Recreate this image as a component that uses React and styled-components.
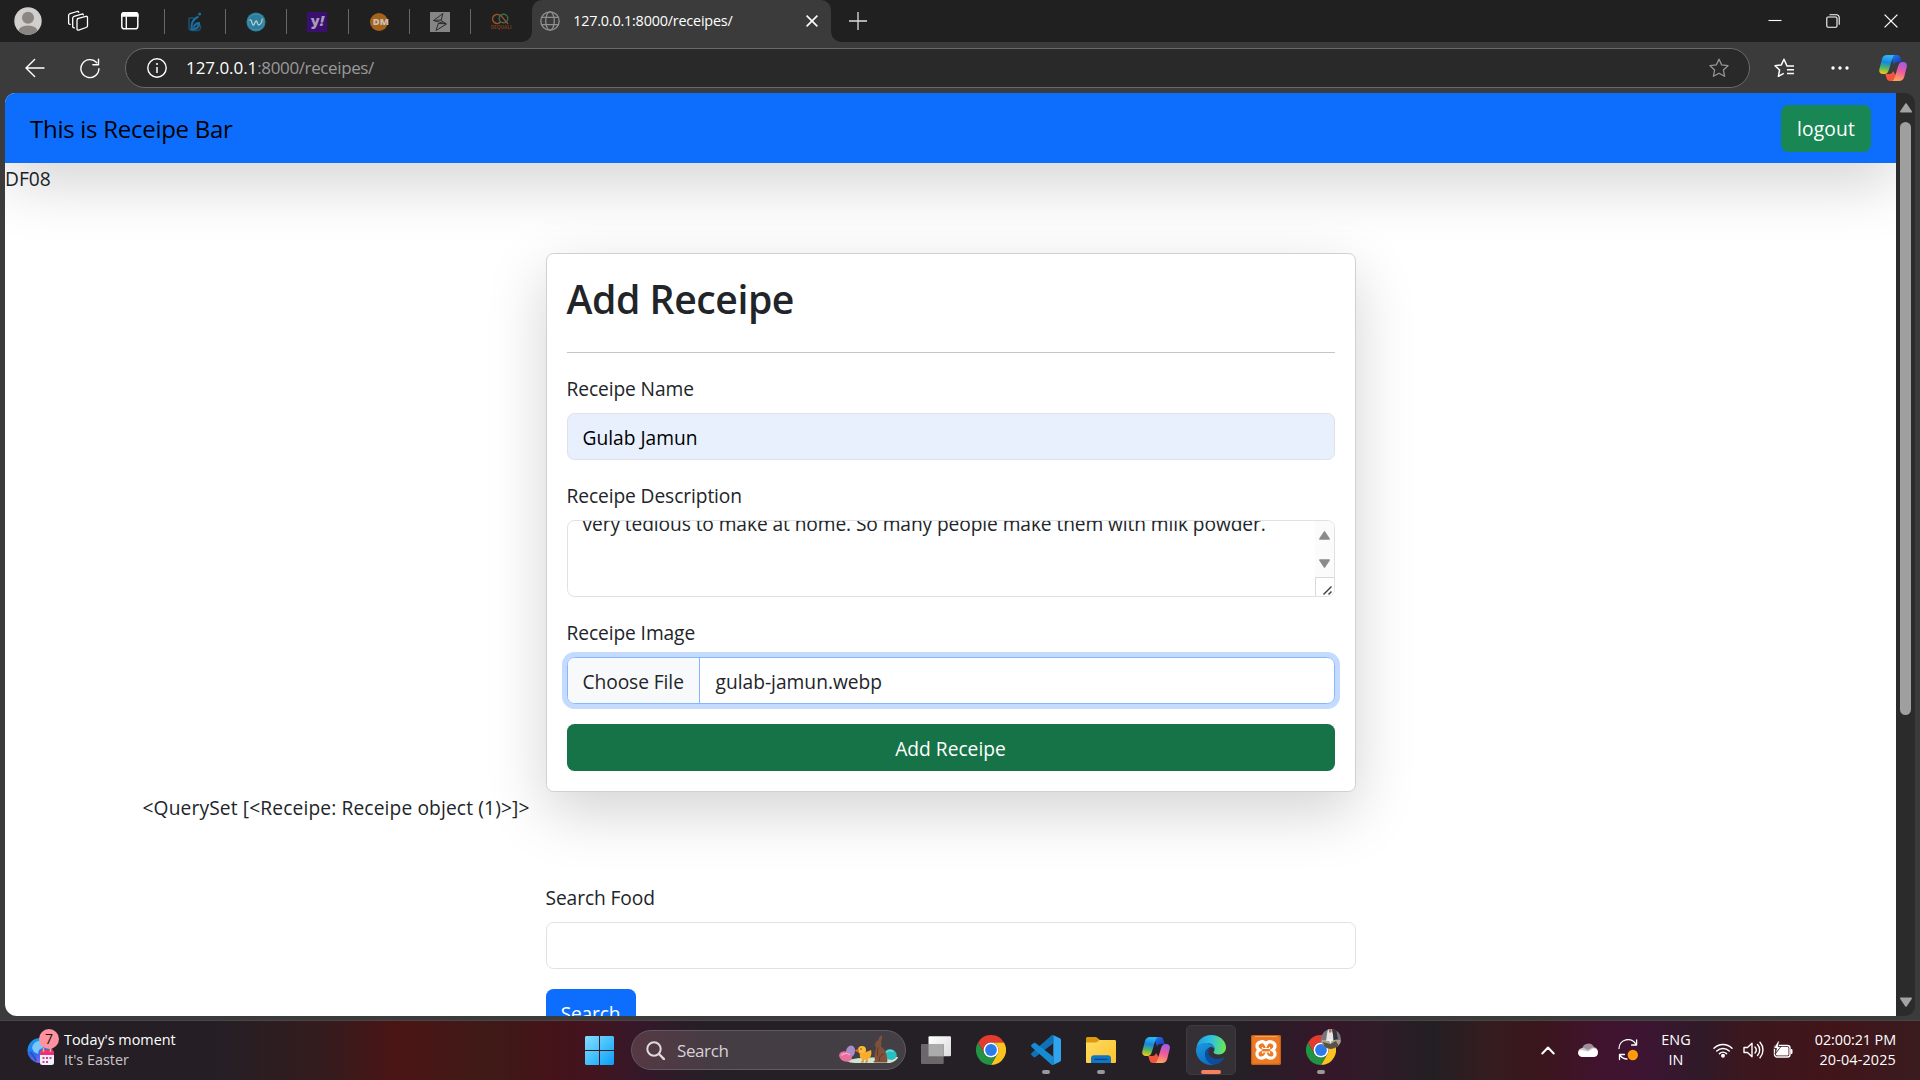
import React from "react";
import styled, { createGlobalStyle, css } from "styled-components";

const GlobalStyle = createGlobalStyle`
  *, *::before, *::after { box-sizing: border-box; }
  body { margin: 0; overflow: hidden; background: #3b3b3b; }
  svg { display: block; flex: none; }
`;

const UI_FONT = `"Segoe UI", "Open Sans", "Noto Sans", sans-serif`;

const Desktop = styled.div`
  width: 1920px;
  height: 1080px;
  display: flex;
  flex-direction: column;
  overflow: hidden;
  background: #3b3b3b;
  font-family: ${UI_FONT};
`;

/* ---------- browser chrome ---------- */

const TabStrip = styled.div`
  display: flex;
  align-items: center;
  height: 42px;
  background: #202020;
`;

const Cell = styled.div`
  width: ${(p) => p.$w}px;
  height: 100%;
  flex: none;
  display: flex;
  align-items: center;
  justify-content: center;
`;

const PinnedTabs = styled.div`
  display: flex;
  flex: none;
  margin: 1px 1px 0 3px;
`;

const PinnedTab = styled.div`
  width: 61.2px;
  height: 25px;
  border-left: 1px solid #686868;
  display: flex;
  align-items: center;
  justify-content: center;
`;

const flare = css`
  content: "";
  position: absolute;
  bottom: 0;
  width: 10px;
  height: 10px;
`;

const ActiveTab = styled.div`
  position: relative;
  width: 299px;
  height: 42px;
  padding: 0 13px 0 8px;
  display: flex;
  align-items: center;
  background: #3b3b3b;
  border-radius: 10px 10px 0 0;
  color: #fff;
  &::before {
    ${flare}
    left: -10px;
    background: radial-gradient(circle at 0 0, transparent 9.5px, #3b3b3b 10px);
  }
  &::after {
    ${flare}
    right: -10px;
    background: radial-gradient(circle at 100% 0, transparent 9.5px, #3b3b3b 10px);
  }
`;

const TabTitle = styled.span`
  flex: 1;
  margin-left: 13px;
  font-size: 14.4px;
  line-height: 20px;
  letter-spacing: -0.2px;
`;

const Spacer = styled.div`
  flex: 1;
`;

const Toolbar = styled.div`
  display: flex;
  align-items: center;
  height: 51px;
  padding: 1px 0 0 7px;
`;

const AddressBar = styled.div`
  width: 1624.5px;
  height: 40px;
  margin: 0 7px 1px 8px;
  padding: 0 20px 0 21px;
  display: flex;
  align-items: center;
  border: 1px solid #6a6a6a;
  border-radius: 20px;
  background: #292929;
`;

const Url = styled.span`
  flex: 1;
  margin-left: 19px;
  font-size: 17px;
  line-height: 24px;
  letter-spacing: -0.38px;
  color: #999;
`;

const Host = styled.span`
  letter-spacing: -0.05px;
  color: #fff;
`;

/* ---------- web page ---------- */

const PageRow = styled.div`
  display: flex;
  height: 923px;
  padding: 0 5px;
`;

const Viewport = styled.div`
  flex: 1;
  overflow: hidden;
  background: #fff;
  border-radius: 10px 0 0 12px;
  color: #212529;
  font-size: 19.2px;
  line-height: 30px;
`;

const Navbar = styled.nav`
  position: relative;
  display: flex;
  align-items: center;
  justify-content: space-between;
  height: 70px;
  padding: 0 25px;
  background: #0d6efd;
  box-shadow: 0 20px 60px rgba(0, 0, 0, 0.175);
`;

const Brand = styled.span`
  padding-top: 2px;
  font-size: 24px;
  letter-spacing: -0.27px;
  color: #000;
`;

const Button = styled.button`
  display: ${(p) => (p.$block ? "block" : "inline-block")};
  width: ${(p) => (p.$block ? "100%" : p.$w + "px")};
  height: 47px;
  padding: 2px 0 0;
  border: 0;
  border-radius: 7.5px;
  background: ${(p) => p.$bg};
  color: #fff;
  font: 19.2px/30px ${UI_FONT};
  letter-spacing: ${(p) => p.$ls || 0}px;
`;

const Username = styled.div`
  height: 30px;
  padding-top: 1px;
`;

const Container = styled.div`
  width: 1650px;
  margin: 60px auto 0;
  padding: 0 16px;
`;

const Card = styled.section`
  width: 810px;
  margin: 0 auto;
  padding: 20px;
  border: 1px solid #d0d0d1;
  border-radius: 7.5px;
  background: #fff;
  box-shadow: 0 20px 60px rgba(0, 0, 0, 0.175);
`;

const Title = styled.h2`
  height: 48px;
  margin: 0;
  padding-top: 1px;
  font-size: 39.2px;
  font-weight: 600;
  line-height: 48px;
  letter-spacing: -0.45px;
`;

const Rule = styled.hr`
  height: 1px;
  margin: 30px 0 20px;
  border: 0;
  background: #c4c5c6;
`;

const Field = styled.div`
  margin-bottom: 20px;
`;

const Label = styled.label`
  display: block;
  height: 30px;
  margin-bottom: 10px;
  padding-top: 1px;
  letter-spacing: -0.1px;
`;

const control = css`
  width: 100%;
  border: 1px solid #dee2e6;
  border-radius: 7.5px;
`;

const Input = styled.input`
  ${control}
  display: block;
  height: 47px;
  padding: 2px 15px 0;
  background: ${(p) => p.$bg || "#fff"};
  color: #000;
  font: 19.2px/30px ${UI_FONT};
  outline: 0;
`;

const TextArea = styled.div`
  ${control}
  display: flex;
  height: 77px;
  overflow: hidden;
`;

const TextAreaText = styled.div`
  flex: 1;
  margin-top: -12px;
  padding-left: 15px;
  white-space: nowrap;
  letter-spacing: -0.1px;
`;

const TextAreaScroll = styled.div`
  width: 19px;
  display: flex;
  flex-direction: column;
  align-items: center;
  background: #fbfbfb;
`;

const ScrollArrows = styled.div`
  flex: 1;
  padding: 10px 0 9px;
  display: flex;
  flex-direction: column;
  justify-content: space-between;
`;

const Resizer = styled.div`
  width: 19px;
  height: 19px;
  border: solid #d9d9db;
  border-width: 1px 0 0 1px;
  background: #fff;
`;

const FileInput = styled.div`
  display: flex;
  height: 47px;
  margin-bottom: 20px;
  border: 1px solid #86b7fe;
  border-radius: 7.5px;
  box-shadow: 0 0 0 5px #c2dbff;
  overflow: hidden;
  line-height: 48px;
`;

const FileButton = styled.span`
  width: 132px;
  padding-left: 15px;
  border-right: 1px solid #86b7fe;
  background: #f8f9fa;
  letter-spacing: -0.08px;
`;

const FileName = styled.span`
  padding-left: 16px;
`;

const QueryDump = styled.div`
  height: 30px;
  padding: 1px 0 0 1px;
  letter-spacing: 0.13px;
`;

const SearchForm = styled.form`
  width: 810px;
  margin: 60px auto 0;
`;

const Scrollbar = styled.div`
  width: 19px;
  padding: 10px 0 9px;
  display: flex;
  flex-direction: column;
  align-items: center;
  background: #2b2b2b;
  border-radius: 0 10px 10px 0;
`;

const Thumb = styled.div`
  width: 11px;
  height: 593px;
  margin: 9px 0 auto;
  border-radius: 6px;
  background: #9f9f9f;
`;

/* ---------- taskbar ---------- */

const Taskbar = styled.footer`
  display: flex;
  align-items: center;
  height: 60px;
  margin-top: 4px;
  padding-bottom: 1px;
  border-top: 1px solid #4b4547;
  background: linear-gradient(
    90deg,
    #251f25 0, #251f25 220px, #361b1d 330px, #4b1414 395px, #3e1a17 490px,
    #451319 550px, #42141f 590px, #35182a 640px, #251f26 710px, #251f26 1240px,
    #35172a 1325px, #2f1c28 1380px, #231f23 1430px, #351c1f 1490px, #3a161c 1540px,
    #41132e 1600px, #3c1532 1650px, #301a28 1700px, #3c171e 1745px, #41151a 1830px,
    #391b1e 1920px
  );
  color: #fff;
`;

const Widget = styled.div`
  display: flex;
  align-items: center;
  width: 572px;
  padding-left: 26px;
`;

const Lines = styled.div`
  display: flex;
  flex-direction: column;
  flex: none;
  align-items: ${(p) => p.$align || "flex-start"};
  margin-left: ${(p) => p.$ml || 0}px;
  padding-right: ${(p) => p.$pr || 0}px;
  width: ${(p) => (p.$w ? p.$w + "px" : "auto")};
`;

const Line = styled.span`
  font-size: 14.4px;
  line-height: 20px;
  letter-spacing: ${(p) => p.$ls || 0}px;
  color: ${(p) => (p.$dim ? "#c9c5c8" : "#fff")};
  white-space: nowrap;
`;

const SearchPill = styled.div`
  width: 275px;
  height: 40px;
  margin: 0 2.5px 0 4px;
  padding: 0 6px 0 14px;
  display: flex;
  align-items: center;
  border: 1px solid #615a60;
  border-radius: 20px;
  background: linear-gradient(90deg, #553843, #443d44 35%, #443f45);
`;

const SearchText = styled.span`
  flex: 1;
  margin-left: 12px;
  font-size: 17px;
  letter-spacing: -0.4px;
  color: #d6d2d5;
`;

const AppSlot = styled.div`
  position: relative;
  width: 50px;
  height: 50px;
  margin: 0 2.5px;
  display: flex;
  align-items: center;
  justify-content: center;
  border: 1px solid ${(p) => (p.$active ? "#3f3a40" : "transparent")};
  border-radius: 5px;
  background: ${(p) => (p.$active ? "#353036" : "transparent")};
`;

const RunMark = styled.span`
  position: absolute;
  bottom: 0;
  left: 50%;
  width: ${(p) => (p.$active ? 20 : 8)}px;
  height: 4px;
  transform: translateX(-50%);
  border-radius: 2px;
  background: ${(p) => (p.$active ? "#f7815f" : "#9b989b")};
`;

/* ---------- icons ---------- */

const Svg = ({ w, h = w, vb, children, ...rest }) => (
  <svg width={w} height={h} viewBox={vb || `0 0 ${w} ${h}`} fill="none" {...rest}>
    {children}
  </svg>
);

const stroke = { stroke: "#fff", strokeWidth: 1.4, strokeLinecap: "round", strokeLinejoin: "round" };

const Avatar = () => (
  <Svg w={28}>
    <clipPath id="av"><circle cx="14" cy="14" r="13.7" /></clipPath>
    <g clipPath="url(#av)">
      <rect width="28" height="28" fill="#d1cfcd" />
      <circle cx="14" cy="10.8" r="6" fill="#8b8682" />
      <ellipse cx="14" cy="25" rx="10" ry="6.6" fill="#8b8682" />
    </g>
  </Svg>
);

const Workspaces = () => (
  <Svg w={22} {...stroke} strokeWidth="1.3">
    <path d="M10.300 8.600 19 6.300c.9-.2 1.500.3 1.500 1.100v8.300c0 .9-.5 1.500-1.400 1.800l-7.400 2.600c-.9.3-1.700-.2-1.700-1.200v-8.600c0-.9.5-1.500 1.300-1.700z" />
    <path d="M7.400 17.800c-1 .2-1.700-.4-1.700-1.400V8.200c0-1 .5-1.600 1.400-1.900l7.600-2.200c.8-.2 1.500.1 1.700.8" />
    <path d="M3.200 14.400c-.9.1-1.600-.5-1.600-1.400V5.600c0-1 .5-1.600 1.400-1.900l7.100-2.200c.8-.2 1.500.1 1.700.8" />
  </Svg>
);

const TabActions = () => (
  <Svg w={20}>
    <rect x="1.8" y="1.8" width="16" height="16" rx="2.6" {...stroke} strokeWidth="1.5" />
    <path d="M1.2 5.8V4a3 3 0 0 1 3-3h11.400a3 3 0 0 1 3 3v1.800z" fill="#fff" />
    <path d="M6.300 6v11.500" {...stroke} />
  </Svg>
);

const FavBlue = () => (
  <Svg w={14} h={20}>
    <path d="M1 6h5M1 6v10c0 2 1.500 2.500 4 2.500h4c2.500 0 3.500-1.500 3.500-3.500 0-3-3.500-3.500-6-1.500" stroke="#1d4f72" strokeWidth="1.500" />
    <path d="M10.500 4.500C6 6.500 3 11 3.500 17c4 1 8-2 7.500-6-2 0-4.500 1.500-5.500 4.500" stroke="#1b6f9f" strokeWidth="2" />
    <circle cx="11.600" cy="2" r="1.500" fill="#1b6f9f" />
  </Svg>
);

const FavW = () => (
  <Svg w={20}>
    <circle cx="10" cy="10" r="9.600" fill="#2b7e9b" />
    <circle cx="10" cy="10" r="7.900" stroke="#4e9ab3" strokeWidth=".7" />
    <path d="M3.500 8.500c1-1 1.800-.5 2.100.8.500 2.300 1 4 1.800 3.900 1.200-.2 1.300-4 2.800-4.200 1.300 0 1.100 4 2.400 4 1.800 0 3.300-3.400 3.700-6.500" stroke="#b7ccd4" strokeWidth="1.300" />
  </Svg>
);

const YahooBox = styled.span`
  width: 20px;
  height: 20px;
  background: #3a0f70;
  color: #a99dbb;
  font: 800 14.5px/17px "Open Sans", sans-serif;
  text-align: center;
`;

const DmBox = styled.span`
  width: 18px;
  height: 18px;
  border-radius: 50%;
  background: #a4621a;
  color: #c9bfb4;
  font: 800 9.5px/18px "Open Sans", sans-serif;
  padding-left: 3px;
  white-space: nowrap;
`;

const FavZig = () => (
  <Svg w={20}>
    <rect width="20" height="20" fill="#858585" />
    <path d="M13 1.500 3.500 8.500 16.500 12 6 18.500 8.500 11M13 1.500 11 8.500 16 11.500M3.500 8.500 11 8M8.500 11.500l7.500.3" stroke="#2d2d2d" strokeWidth="1" />
  </Svg>
);

const CqBox = styled.span`
  width: 20px;
  display: flex;
  flex-direction: column;
  align-items: center;
  font: 700 4.7px/5px "Open Sans", sans-serif;
  color: #7d3c1d;
`;

const CqIcon = () => (
  <CqBox>
    <Svg w={18} h={12}>
      <path d="M8 2.500A4.500 4.500 0 1 0 8.500 9" stroke="#9a5426" strokeWidth="1.500" />
      <circle cx="11.500" cy="5.500" r="4.300" stroke="#3d6b52" strokeWidth="1.400" />
      <path d="m8.500 2 7.500 9" stroke="#9a5426" strokeWidth="1.200" />
    </Svg>
    DEQUALI
  </CqBox>
);

const Globe = () => (
  <Svg w={20} stroke="#8f8f8f" strokeWidth="1.300">
    <circle cx="10" cy="10" r="9.200" />
    <ellipse cx="10" cy="10" rx="4.300" ry="9.200" />
    <path d="M1.700 6.300h16.600M1.700 13.700h16.600" />
  </Svg>
);

const Cross = ({ s = 12, sw = 1.6 }) => (
  <Svg w={s} {...stroke} strokeWidth={sw} strokeLinecap="butt">
    <path d={`M.6.6 ${s - 0.6} ${s - 0.6}M${s - 0.6}.6.6 ${s - 0.6}`} />
  </Svg>
);

const Plus = () => (
  <Svg w={18}><path d="M9 0v18M0 9h18" stroke="#ddd" strokeWidth="1.300" /></Svg>
);

const Minimize = () => (
  <Svg w={14}><path d="M.5 6.500h13" stroke="#fff" strokeWidth="1.100" /></Svg>
);

const Restore = () => (
  <Svg w={14} stroke="#fff" strokeWidth="1.100">
    <rect x=".8" y="3" width="10.200" height="10.200" rx="1.200" />
    <path d="M3.500.8h7.200a2.500 2.500 0 0 1 2.500 2.500v7.500" />
  </Svg>
);

const Back = () => (
  <Svg w={20} {...stroke} strokeWidth="1.400"><path d="M19 10H1.200M9.600 1.500 1 10l8.600 8.500" /></Svg>
);

const Reload = () => (
  <Svg w={20} h={21} {...stroke} strokeWidth="1.400">
    <path d="M18.900 10.800a9 9 0 1 1-2.100-6" />
    <path d="M18.500 1.200v5.600h-5.600" />
  </Svg>
);

const Info = () => (
  <Svg w={20} stroke="#fff" strokeWidth="1.400">
    <circle cx="10" cy="10" r="9.200" />
    <path d="M10 9v6" strokeWidth="1.500" />
    <circle cx="10" cy="6" r=".4" />
  </Svg>
);

const STAR = "m10 1.200 2.700 5.700 6.300.8-4.600 4.300 1.200 6.300-5.600-3.100-5.600 3.100 1.200-6.300L1 7.700l6.300-.8z";

const Star = () => (
  <Svg w={20} stroke="#959595" strokeWidth="1.300" strokeLinejoin="round"><path d={STAR} /></Svg>
);

const FavList = () => (
  <Svg w={21} h={20} {...stroke} strokeWidth="1.500">
    <path d="M20 8h-7L10 1.200 7.300 6.900 1 7.700l4.600 4.300-1.200 6.300 5.300-3M13 11.700h7M13 15.400h7" strokeLinecap="butt" />
  </Svg>
);

const Dots = () => (
  <Svg w={18} h={4}>
    <circle cx="2" cy="2" r="1.700" fill="#fff" /><circle cx="9" cy="2" r="1.700" fill="#fff" /><circle cx="16" cy="2" r="1.700" fill="#fff" />
  </Svg>
);

const Copilot = ({ id }) => (
  <Svg w={28} h={26}>
    <defs>
      <linearGradient id={id + "a"} x1="8" y1="1" x2="5" y2="19" gradientUnits="userSpaceOnUse">
        <stop stopColor="#2cb5f5" /><stop offset=".35" stopColor="#1787e0" /><stop offset=".65" stopColor="#4cb56a" /><stop offset="1" stopColor="#f6c915" />
      </linearGradient>
      <linearGradient id={id + "b"} x1="22" y1="7" x2="17" y2="25" gradientUnits="userSpaceOnUse">
        <stop stopColor="#a25ae8" /><stop offset=".5" stopColor="#ee5b9a" /><stop offset="1" stopColor="#ffa35c" />
      </linearGradient>
      <linearGradient id={id + "c"} x1="14" y1="0" x2="19" y2="8" gradientUnits="userSpaceOnUse">
        <stop stopColor="#1f7ae6" /><stop offset="1" stopColor="#1b3fc2" />
      </linearGradient>
    </defs>
    <path d="M9 0h9c2 0 3 1.300 3.500 3l1.200 4h-4c-2 0-3.200 1-3.800 3L12 0z" fill={`url(#${id}c)`} />
    <path d="M19 26h-8c-2 0-3-1.300-3.500-3l-1.200-4h4c2 0 3.200-1 3.800-3l2.500 4z" fill="#f2553d" />
    <path d="M8 0h8c-1.500.5-2.200 2-2.700 3.500L10 14.500C9 17.500 8 19 5.500 19H4c-3 0-4.300-2-3.600-5L3 4C3.700 1.500 5.500 0 8 0z" fill={`url(#${id}a)`} />
    <path d="M20 26h-7c1.500-.5 2.200-2 2.700-3.500L19 11.500c1-3 2-4.500 4.500-4.500h.7c3 0 4.300 2 3.500 5l-2.500 10c-.7 2.500-2.700 4-5.200 4z" fill={`url(#${id}b)`} />
  </Svg>
);

const Arrow = ({ down, w = 12, h = 10, fill = "#a3a3a3" }) => (
  <Svg w={w} h={h} vb="0 0 12 10">
    <path
      transform={down ? "rotate(180 6 5)" : undefined}
      d="M6 1 11.200 8.800H.8z" fill={fill} stroke={fill} strokeWidth="1.600" strokeLinejoin="round"
    />
  </Svg>
);

const Grip = () => (
  <Svg w={18}><path d="m7.500 16.500 8-8M12.500 16.500l3-3" stroke="#444" strokeWidth="1.500" /></Svg>
);

const Moment = () => (
  <Svg w={34} h={38}>
    <defs>
      <linearGradient id="gl" x1="6" y1="10" x2="18" y2="36" gradientUnits="userSpaceOnUse">
        <stop stopColor="#10a4f2" /><stop offset=".55" stopColor="#2f6be6" /><stop offset="1" stopColor="#a85af0" />
      </linearGradient>
    </defs>
    <circle cx="14" cy="22.500" r="12.500" fill="url(#gl)" />
    <path d="M6 20c1-5 5-8 10-7l2 6-5 3-1 4-4-2z" fill="#7cc6fb" />
    <path d="M4 24c3 3 5 5 6 9" stroke="#2456c8" strokeWidth="2" />
    <rect x="14" y="23" width="14" height="14" rx="2.500" fill="#eef0fa" />
    <path d="M14 27v-2a3 3 0 0 1 3-3h8a3 3 0 0 1 3 3v2z" fill="#ef2e7b" />
    <path d="M17.500 20v4M24.500 20v4" stroke="#f5b14a" strokeWidth="1.500" />
    <g fill="#d83c86">
      <rect x="16.500" y="29" width="2" height="2" /><rect x="20" y="29" width="2" height="2" /><rect x="23.500" y="29" width="2" height="2" />
      <rect x="16.500" y="33" width="2" height="2" /><rect x="20" y="33" width="2" height="2" />
    </g>
  </Svg>
);

const MomentBox = styled.div`
  position: relative;
  margin-top: -7px;
`;

const Badge = styled.span`
  position: absolute;
  left: 13px;
  top: 1px;
  width: 20px;
  height: 20px;
  border-radius: 50%;
  background: #ff929e;
  color: #1c1418;
  font-size: 14px;
  line-height: 20px;
  text-align: center;
`;

const WindowsLogo = () => (
  <Svg w={29}>
    <defs>
      <linearGradient id="win" x1="0" y1="0" x2="29" y2="29" gradientUnits="userSpaceOnUse">
        <stop stopColor="#84dcff" /><stop offset=".5" stopColor="#45c1fb" /><stop offset="1" stopColor="#0b9cf8" />
      </linearGradient>
    </defs>
    <path fill="url(#win)" d="M1 0h13v14H0V1zM15 0h13l1 1v13H15zM0 15h14v14H1l-1-1zM15 15h14v13l-1 1H15z" />
  </Svg>
);

const SearchGlyph = () => (
  <Svg w={19} stroke="#dedade" strokeWidth="2">
    <circle cx="8" cy="8" r="6.700" /><path d="m13 13 5 5.200" strokeWidth="2.400" strokeLinecap="round" />
  </Svg>
);

const EasterScene = () => (
  <Svg w={60} h={30}>
    <path d="M8 26c6-3 14-3 24-3.500S50 21 59 22c0 2-4 5-8 6H16c-4 0-6-1-8-2z" fill="#cfe6cd" />
    <ellipse cx="11.500" cy="16.500" rx="4.500" ry="6" transform="rotate(15 11.500 16.500)" fill="#a98cc9" />
    <ellipse cx="6.500" cy="21.500" rx="6.600" ry="4.900" transform="rotate(25 6.500 21.500)" fill="#e8709f" />
    <path d="M2.500 20.500c2.500-2.500 6-2.500 8.500-.500" stroke="#f4abc6" strokeWidth="1.400" />
    <ellipse cx="51.500" cy="19.500" rx="6.300" ry="5.300" transform="rotate(20 51.500 19.500)" fill="#27bfc0" />
    <path d="M47.500 17c2-1.800 4.500-1.800 7-.5" stroke="#7fe0dc" strokeWidth="1.200" />
    <circle cx="23" cy="15" r="4" fill="#fdbb3c" />
    <path d="M21 18c3 0 7-1 11-3 1.500 5-1 10-6 10-4 0-6-3-5-7z" fill="#fbac2b" />
    <path d="m19 14.500-2 1.200 2.500 1zM24 24.500v2.500h-2M28 24.500v2.500h-2" stroke="#e3701c" strokeWidth="1.200" />
    <circle cx="22" cy="14" r=".7" fill="#51300d" />
    <path d="M36 10c0-3 2-4.500 3.500-4.700C39.500 3 41 .8 42.500.5c1 0 1 3.500-.5 6 .6 1.500.6 3-.3 4.500 4 3 6 7 6.300 11.500.6 2 .6 3.500 0 5H36c-2 0-2-1.500 0-2-1-4.500-.6-9 1.200-12.500C36.500 12 36 11 36 10z" fill="#80503a" />
    <path d="M40.500 26c-.500-4 1.500-6.500 4.500-7M39 12.500c-.5 2.500-.8 5-.5 8" stroke="#5f3826" strokeWidth="1" />
  </Svg>
);

const TaskView = () => (
  <Svg w={30} h={28}>
    <defs>
      <linearGradient id="tv" x1="8" y1="0" x2="30" y2="20" gradientUnits="userSpaceOnUse"><stop stopColor="#fff" /><stop offset="1" stopColor="#dcdcdc" /></linearGradient>
    </defs>
    <rect x="7.500" y=".3" width="22.500" height="20" rx="1" fill="url(#tv)" />
    <rect y="8" width="22.700" height="20" rx="1" fill="#6b686b" />
    <path d="M7.500 8h15.200v12.300H7.500z" fill="#ababab" />
  </Svg>
);

const Chrome = () => (
  <Svg w={30}>
    <path d="M2 7.500A15 15 0 0 1 28 7.500H15a7.500 7.500 0 0 0-6.500 11.250z" fill="#e33b2e" />
    <path d="M28 7.500A15 15 0 0 1 15 30l6.500-11.250A7.500 7.500 0 0 0 15 7.500z" fill="#fcc31f" />
    <path d="M2 7.500A15 15 0 0 0 15 30l6.500-11.250a7.500 7.500 0 0 1-13 0z" fill="#229342" />
    <circle cx="15" cy="15" r="7.500" fill="#fff" />
    <circle cx="15" cy="15" r="5.900" fill="#2d7bea" />
  </Svg>
);

const VsCode = () => (
  <Svg w={30}>
    <path d="M22 0v8.500L4.500 22c-.6.500-1.300.5-1.800 0L.6 20.200c-.7-.6-.7-1.500 0-2.200L20.300.6C20.700.2 21.400 0 22 0z" fill="#0f72b8" />
    <path d="M22 30v-8.500L4.500 8c-.6-.5-1.300-.5-1.800 0L.6 9.800c-.7.6-.7 1.500 0 2.200l19.700 17.400c.4.400 1.100.6 1.700.6z" fill="#168bd2" />
    <path d="m22 0 6.800 3.200c.7.400 1.200 1 1.200 1.800v20c0 .8-.5 1.500-1.200 1.800L22 30c.3-.2.3-.5.300-1V1c0-.5 0-.8-.3-1z" fill="#2fa5f0" />
  </Svg>
);

const Folder = () => (
  <Svg w={30} h={28}>
    <defs>
      <linearGradient id="fo" x1="0" y1="4" x2="30" y2="28" gradientUnits="userSpaceOnUse"><stop stopColor="#ffdb63" /><stop offset="1" stopColor="#fcc32d" /></linearGradient>
    </defs>
    <path d="M0 8V2.500C0 1.500.8 1 1.800 1h7.500c.8 0 1.300.2 1.900.7L14 4H14v6H0z" fill="#dd9b0c" />
    <path d="M0 6.500h9c1.500 0 2.200-.4 3-1.200l1-1c.3-.2.6-.3 1-.3h14.500c1 0 1.500.5 1.500 1.500v20c0 1-.5 1.500-1.500 1.500h-27C.5 27 0 26.500 0 25.500z" fill="url(#fo)" />
    <path d="M5 27v-4.500c0-2 1.200-3.200 3.200-3.200h13.600c2 0 3.200 1.200 3.200 3.200V27z" fill="#0f75c5" />
    <path d="M9 23.300h12" stroke="#0b437d" strokeWidth="1.300" strokeLinecap="round" />
  </Svg>
);

const Edge = () => (
  <Svg w={30}>
    <defs>
      <linearGradient id="e1" x1="0" y1="8" x2="30" y2="12" gradientUnits="userSpaceOnUse">
        <stop stopColor="#1f9fe0" /><stop offset=".5" stopColor="#2fc2df" /><stop offset="1" stopColor="#6bea4a" />
      </linearGradient>
      <linearGradient id="e2" x1="4" y1="8" x2="14" y2="30" gradientUnits="userSpaceOnUse">
        <stop stopColor="#1b95dd" /><stop offset="1" stopColor="#0b6cc4" />
      </linearGradient>
    </defs>
    <path d="M.5 12.500C1.500 5 7.500 0 15 0c9 0 15 6 15 12.500 0 4-3 7-7 7-3.500 0-5.500-1.300-5.500-2.200 0-.7 1-1.300 1-3.300 0-3.200-3-6-7.500-6-5 0-9 2.500-10.500 4.500z" fill="url(#e1)" />
    <path d="M0 15C0 10.500 4.500 8 10 8c4.500 0 8.500 2.500 8.500 6-1-1.500-3-2.500-5-1.500-3.500 1.500-5 5-4 9 1 4.500 4.500 7.500 8.500 8.200-1 .3-2 .3-3 .3C6.500 30 0 23 0 15z" fill="url(#e2)" />
    <path d="M9.500 17c-1.500 6 2.500 12 8.500 12.700 4.500-.7 8-3.200 10-6.500.3-.6 0-.9-.6-.6-2 1-4 1.300-6 1.300-5 0-9-3-9-7 0-1.500.5-3 1.500-4.200-2.200.6-3.900 2.300-4.400 4.300z" fill="#0d4d9d" />
  </Svg>
);

const Xampp = () => (
  <Svg w={30}>
    <rect width="30" height="30" rx="2" fill="#ee7a24" />
    <path d="M4 1.500h22" stroke="#ffb27a" strokeWidth="1" />
    <rect x=".7" y=".7" width="28.600" height="28.600" rx="1.500" stroke="#bf5a13" strokeWidth="1" />
    <path
      d="M15 9.500c-1-2.200-3-3-5-2.700-2.600.4-4 2.200-4 4.300 0 1.800 1 3 2.500 3.900-1.600.9-2.500 2.200-2.500 3.900 0 2.400 1.800 4.200 4.300 4.300 2.200 0 3.800-1 4.700-2.900.9 1.900 2.500 2.900 4.700 2.900 2.500-.1 4.300-1.900 4.300-4.300 0-1.700-.9-3-2.500-3.900 1.500-.9 2.500-2.100 2.500-3.900 0-2.100-1.400-3.900-4-4.300-2-.3-4 .5-5 2.700z"
      fill="#ee7a24" stroke="#fff" strokeWidth="3.200"
    />
    <path d="M11.500 12v1.500h7V12M11.500 18.500V17h7v1.500" stroke="#fff" strokeWidth="1.200" />
  </Svg>
);

const ProfilePhoto = styled.span`
  position: absolute;
  left: 24px;
  top: 3px;
  width: 20px;
  height: 20px;
  border-radius: 50%;
  overflow: hidden;
`;

const ProfileArt = () => (
  <Svg w={20}>
    <rect width="20" height="20" fill="#77777b" />
    <path d="M0 11h20v9H0z" fill="#a8a290" />
    <path d="M7 0h4l1 6v6H5L6 5z" fill="#e7e3e6" />
    <path d="M11 0h4l2 10-4 1z" fill="#35343b" />
    <path d="M7.500 0h3v3l-2 1z" fill="#b36d52" />
    <path d="m2 13 7 2 6-3 3 5-7 3H4z" fill="#5c5145" />
    <path d="m7 10 4 0-1 5z" fill="#eee" />
  </Svg>
);

const Chevron = () => (
  <Svg w={14} h={9} {...stroke} strokeWidth="2"><path d="m1.300 7.500 5.700-6 5.700 6" /></Svg>
);

const Cloud = () => (
  <Svg w={20} h={14}>
    <path d="M4 5.500A6.500 6.500 0 0 1 16 4l-6 5.500-9 0c-.8-2 .8-4 3-4z" fill="#9f8d99" />
    <path d="M3.600 5.300c2-.6 4 .3 6 1.700l5-2.500c3-1 5.400 1.500 5.400 4.500H.5c-.3-2 1-3.300 3.100-3.700z" fill="#cfc6cc" />
    <path d="M0 10c0-2 1.500-3 3.500-3L10 8.500 15 5.500c3-.5 5 1.500 5 4.300S18 14 15.500 14H4.500C2 14 0 12 0 10z" fill="#fff" />
  </Svg>
);

const Sync = () => (
  <Svg w={20} h={22}>
    <g {...stroke} strokeWidth="1.300">
      <path d="M1 9.500A9 9 0 0 1 18 5.500M18.600 1v5h-5" />
      <path d="M9 20c-3 0-5-1.200-6.800-3.500M1.500 20.500v-5h5" />
    </g>
    <circle cx="14.800" cy="16" r="5.200" fill="#ff9a0c" />
  </Svg>
);

const Wifi = () => (
  <Svg w={20} h={16} {...stroke} strokeWidth="1.500">
    <path d="M1 6.200a12.700 12.700 0 0 1 18 0M3.800 9a8.700 8.700 0 0 1 12.400 0M6.500 11.600a5 5 0 0 1 7 0" />
    <circle cx="10" cy="13.800" r="1.200" fill="#fff" />
  </Svg>
);

const Volume = () => (
  <Svg w={21} h={18} {...stroke} strokeWidth="1.400">
    <path d="M1 6.500h3.500L9 2.300v13.400l-4.500-4.200H1z" />
    <path d="M12 6a4.500 4.500 0 0 1 0 6M14.500 3.500a8 8 0 0 1 0 11M17 1.300a11.500 11.500 0 0 1 0 15.400" />
  </Svg>
);

const Battery = () => (
  <Svg w={20} h={18}>
    <rect x="1.500" y="4.500" width="15.500" height="11.500" rx="2.500" stroke="#fff" strokeWidth="1.400" />
    <path d="M7 6.500h8v7.500H3.500v-1.500z" fill="#fff" stroke="#fff" />
    <path d="M18 8.500h1v4h-1z" fill="#fff" stroke="#fff" />
    <path d="M5 0 .5 7.500h3L2 13l6-7.500H5.200L6.500 0z" fill="#fff" stroke="#3c1720" strokeWidth=".8" />
  </Svg>
);

/* ---------- composition ---------- */

const pinned = [
  <FavBlue />,
  <FavW />,
  <YahooBox>y<i>!</i></YahooBox>,
  <DmBox>DM</DmBox>,
  <FavZig />,
  <CqIcon />,
];

const apps = [
  { icon: <TaskView /> },
  { icon: <Chrome /> },
  { icon: <VsCode />, running: true },
  { icon: <Folder />, running: true },
  { icon: <Copilot id="t" /> },
  { icon: <Edge />, running: true, active: true },
  { icon: <Xampp /> },
  { icon: <Chrome />, running: true, photo: true },
];

export default function App() {
  return (
    <Desktop>
      <GlobalStyle />
      <TabStrip>
        <Cell $w={56}><Avatar /></Cell>
        <Cell $w={43}><Workspaces /></Cell>
        <Cell $w={62}><TabActions /></Cell>
        <PinnedTabs>
          {pinned.map((icon, i) => <PinnedTab key={i}>{icon}</PinnedTab>)}
        </PinnedTabs>
        <ActiveTab>
          <Globe />
          <TabTitle>127.0.0.1:8000/receipes/</TabTitle>
          <Cross s={12} />
        </ActiveTab>
        <Cell $w={54}><Plus /></Cell>
        <Spacer />
        <Cell $w={58}><Minimize /></Cell>
        <Cell $w={58}><Restore /></Cell>
        <Cell $w={58}><Cross s={14} sw={1.3} /></Cell>
      </TabStrip>

      <Toolbar>
        <Cell $w={56}><Back /></Cell>
        <Cell $w={54}><Reload /></Cell>
        <AddressBar>
          <Info />
          <Url><Host>127.0.0.1</Host>:8000/receipes/</Url>
          <Star />
        </AddressBar>
        <Cell $w={56}><FavList /></Cell>
        <Cell $w={54}><Dots /></Cell>
        <Cell $w={52}><Copilot id="c" /></Cell>
      </Toolbar>

      <PageRow>
        <Viewport>
          <Navbar>
            <Brand>This is Receipe Bar</Brand>
            <Button $w={90} $bg="#198754" $ls={0.2}>logout</Button>
          </Navbar>
          <Username>DF08</Username>
          <Container>
            <Card>
              <Title>Add Receipe</Title>
              <Rule />
              <Field>
                <Label>Receipe Name</Label>
                <Input $bg="#e8f0fe" defaultValue="Gulab Jamun" />
              </Field>
              <Field>
                <Label>Receipe Description</Label>
                <TextArea>
                  <TextAreaText>very tedious to make at home. So many people make them with milk powder.</TextAreaText>
                  <TextAreaScroll>
                    <ScrollArrows>
                      <Arrow w={11} h={9} fill="#8b8b8b" />
                      <Arrow w={11} h={9} fill="#8b8b8b" down />
                    </ScrollArrows>
                    <Resizer><Grip /></Resizer>
                  </TextAreaScroll>
                </TextArea>
              </Field>
              <Label>Receipe Image</Label>
              <FileInput>
                <FileButton>Choose File</FileButton>
                <FileName>gulab-jamun.webp</FileName>
              </FileInput>
              <Button $block $bg="#157347">Add Receipe</Button>
            </Card>
            <QueryDump>{"<QuerySet [<Receipe: Receipe object (1)>]>"}</QueryDump>
            <SearchForm>
              <Label>Search Food</Label>
              <Field><Input /></Field>
              <Button type="button" $w={90} $bg="#0d6efd" $ls={-0.2}>Search</Button>
            </SearchForm>
          </Container>
        </Viewport>
        <Scrollbar>
          <Arrow />
          <Thumb />
          <Arrow down />
        </Scrollbar>
      </PageRow>

      <Taskbar>
        <Widget>
          <MomentBox><Moment /><Badge>7</Badge></MomentBox>
          <Lines $ml={4}>
            <Line>Today's moment</Line>
            <Line $dim>It's Easter</Line>
          </Lines>
        </Widget>
        <Cell $w={55}><WindowsLogo /></Cell>
        <SearchPill>
          <SearchGlyph />
          <SearchText>Search</SearchText>
          <EasterScene />
        </SearchPill>
        {apps.map((app, i) => (
          <AppSlot key={i} $active={app.active}>
            {app.icon}
            {app.photo && <ProfilePhoto><ProfileArt /></ProfilePhoto>}
            {app.running && <RunMark $active={app.active} />}
          </AppSlot>
        ))}
        <Spacer />
        <Cell $w={40}><Chevron /></Cell>
        <Cell $w={40}><Cloud /></Cell>
        <Cell $w={40}><Sync /></Cell>
        <Lines $align="center" $w={56}>
          <Line>ENG</Line>
          <Line>IN</Line>
        </Lines>
        <Cell $w={38}><Wifi /></Cell>
        <Cell $w={22}><Volume /></Cell>
        <Cell $w={38}><Battery /></Cell>
        <Lines $align="flex-end" $w={118} $pr={24}>
          <Line $ls={-0.1}>02:00:21 PM</Line>
          <Line $ls={0.15}>20-04-2025</Line>
        </Lines>
      </Taskbar>
    </Desktop>
  );
}
